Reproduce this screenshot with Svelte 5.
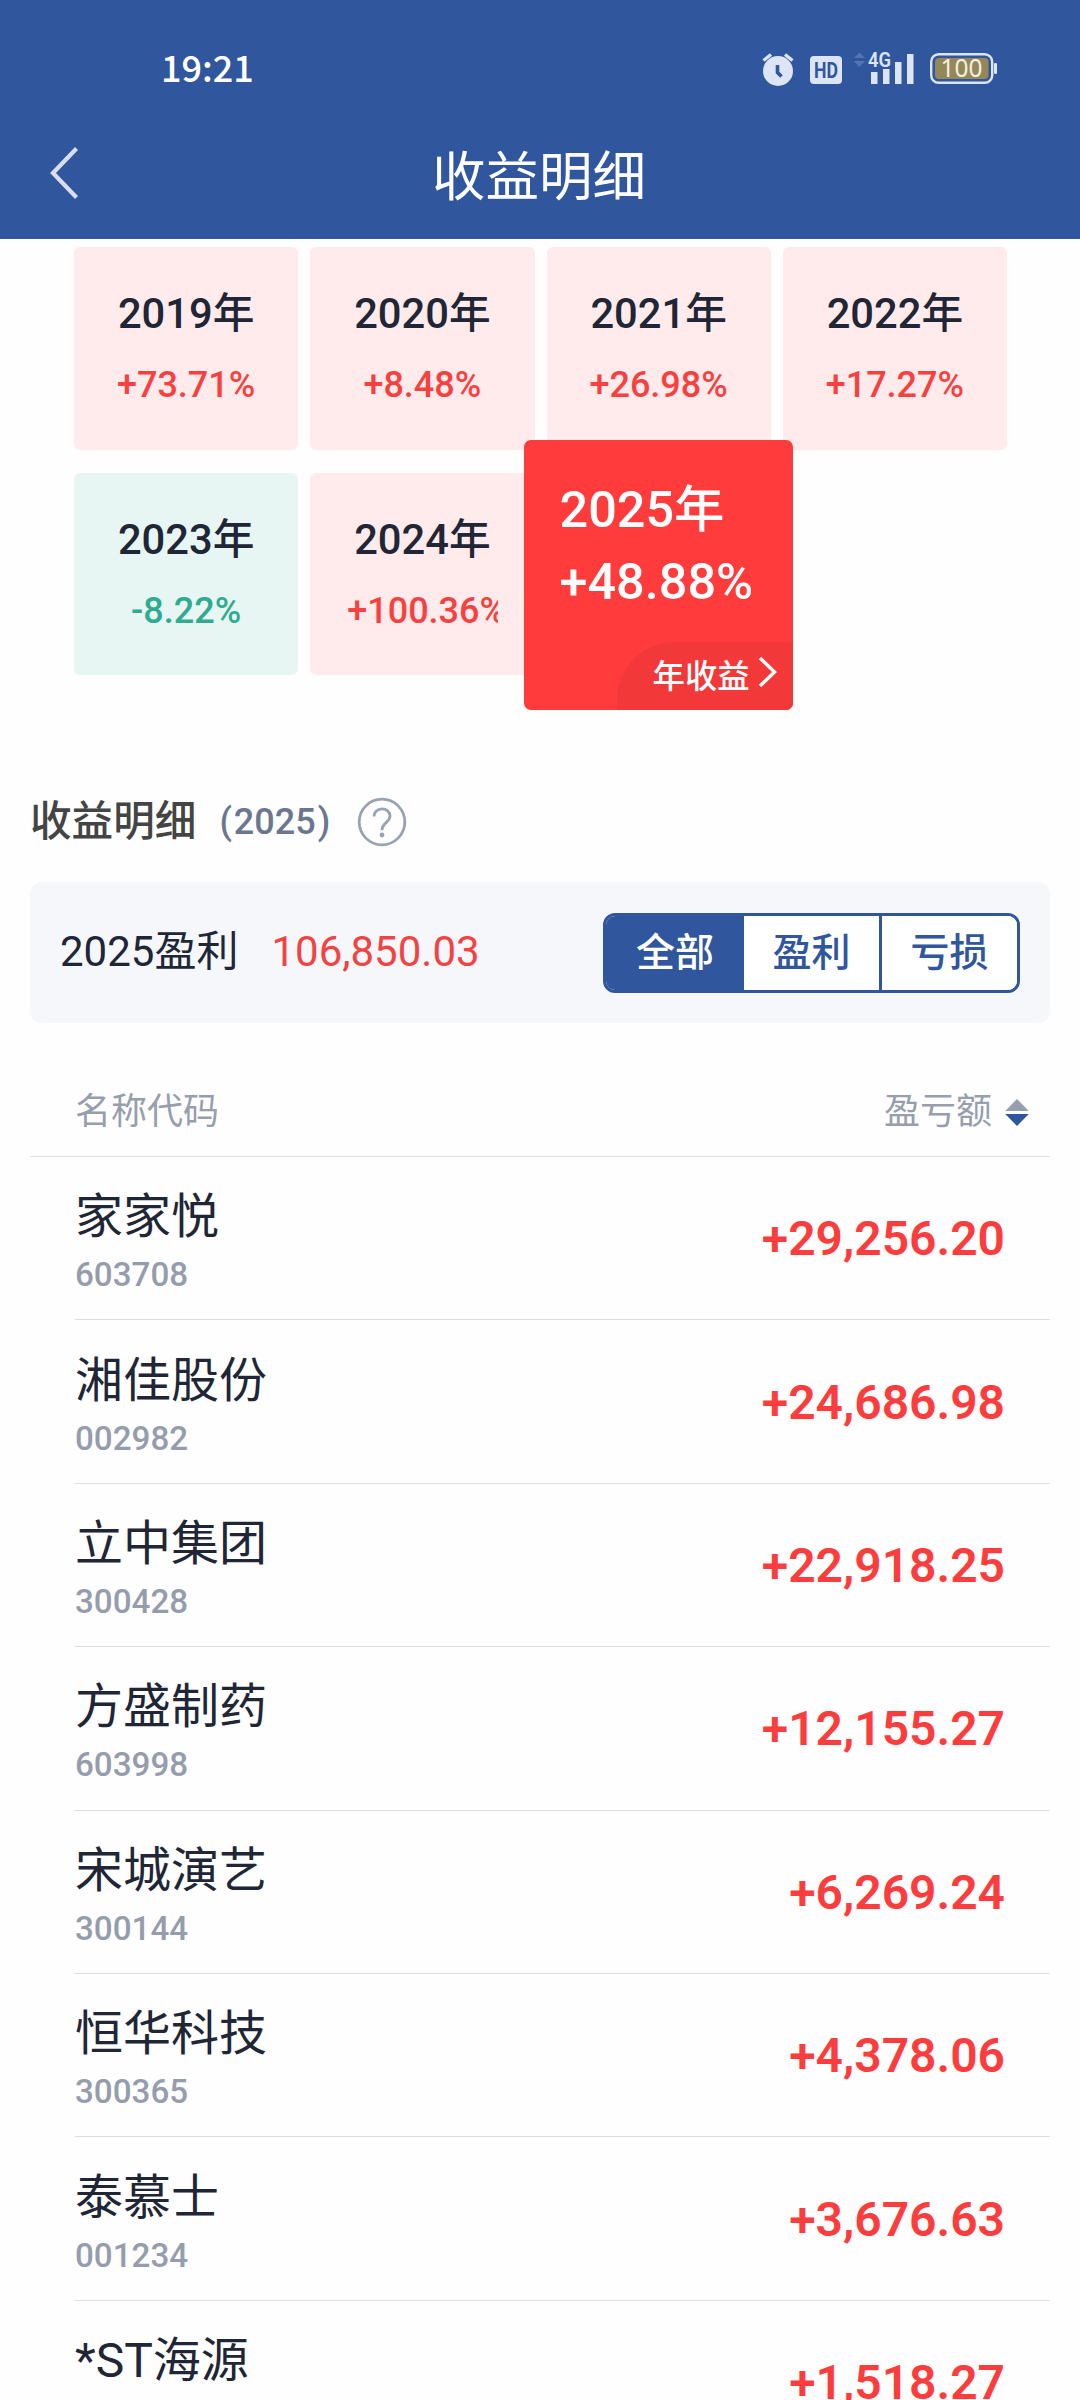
<script>
  let filter = 'all';

  const years = [
    { year: 2019, rate: 73.71 },
    { year: 2020, rate: 8.48 },
    { year: 2021, rate: 26.98 },
    { year: 2022, rate: 17.27 },
    { year: 2023, rate: -8.22 },
    { year: 2024, rate: 100.36 },
    { year: 2025, rate: 48.88 }
  ];
  const selected = 2025;

  const tabs = [
    { key: 'all', label: '全部' },
    { key: 'gain', label: '盈利' },
    { key: 'loss', label: '亏损' }
  ];

  const stocks = [
    { name: '家家悦', code: '603708', amount: 29256.2 },
    { name: '湘佳股份', code: '002982', amount: 24686.98 },
    { name: '立中集团', code: '300428', amount: 22918.25 },
    { name: '方盛制药', code: '603998', amount: 12155.27 },
    { name: '宋城演艺', code: '300144', amount: 6269.24 },
    { name: '恒华科技', code: '300365', amount: 4378.06 },
    { name: '泰慕士', code: '001234', amount: 3676.63 },
    { name: '*ST海源', code: '', amount: 1518.27 }
  ];

  $: rows = stocks.filter((s) => filter === 'all' || (filter === 'gain' ? s.amount > 0 : s.amount < 0));

  function formatRate(n) {
    return (n > 0 ? '+' : '') + n.toFixed(2) + '%';
  }

  function formatMoney(n) {
    return n.toFixed(2).replace(/\B(?=(\d{3})+\.)/g, ',');
  }
</script>

<div class="screen">
  <header>
    <div class="status">
      <span class="time">19:21</span>
      <svg class="status-icons" width="280" height="80" viewBox="0 0 280 80" fill="#dde5f4">
        <!-- alarm -->
        <circle cx="38" cy="41" r="15" />
        <path d="M23.500 30.500 31 24.500M52.500 30.500 45 24.500" stroke="#dde5f4" stroke-width="3.4" />
        <path d="M37.500 35v7.500l4 4" fill="none" stroke="#30569e" stroke-width="3.6" />
        <!-- HD -->
        <rect x="70" y="26" width="32" height="28" rx="4" />
        <text class="hd" x="74" y="48" textLength="24" lengthAdjust="spacingAndGlyphs">HD</text>
        <!-- signal -->
        <path d="M119.500 22.500 125 28h-11zM119.500 37 125 31h-11z" fill="#5575b2" />
        <text class="net" x="128" y="37" textLength="23" lengthAdjust="spacingAndGlyphs">4G</text>
        <path d="M131 42h6.500v12H131zM143 39h6.500v15H143zM155 32h6.500v22H155zM167 24h6.500v30H167z" />
        <!-- battery -->
        <rect x="191.200" y="24.200" width="61" height="28.600" rx="7.500" fill="none" stroke="#dde5f4" stroke-width="2.4" />
        <rect x="195" y="28" width="53.500" height="21" rx="4" fill="#958858" />
        <rect x="254" y="33" width="3" height="11" rx="1.200" />
        <text class="level" x="200.500" y="47" textLength="42" lengthAdjust="spacingAndGlyphs">100</text>
      </svg>
    </div>
    <div class="nav">
      <svg class="back" width="30" height="54" viewBox="0 0 30 54">
        <path d="M27.500 2.500 4 27 27.500 51.500" fill="none" stroke="#d9deee" stroke-width="4.2" />
      </svg>
      <h1>收益明细</h1>
    </div>
  </header>

  <section class="years">
    {#each years as y}
      <div class="cell">
        {#if y.year === selected}
          <div class="card-active">
            <div class="year">{y.year}年</div>
            <div class="rate">{formatRate(y.rate)}</div>
            <div class="more">
              年收益
              <svg width="20" height="32" viewBox="0 0 20 32">
                <path d="M2 2 16.500 16 2 30" fill="none" stroke="#fff" stroke-width="3.4" />
              </svg>
            </div>
          </div>
        {:else}
          <div class="card" class:down={y.rate < 0}>
            <div class="year">{y.year}年</div>
            <div class="rate">{formatRate(y.rate)}</div>
          </div>
        {/if}
      </div>
    {/each}
  </section>

  <section class="detail">
    <div class="heading">
      <h2>收益明细</h2>
      <span class="heading-year">(<b>{selected}</b>)</span>
      <svg width="50" height="50" viewBox="0 0 50 50" fill="none" stroke="#99a2b2" stroke-width="2.8">
        <circle cx="25" cy="25" r="22.800" />
        <path d="M17 19.500c0-4.600 3.500-7.700 8-7.700s8 3.100 8 7.300c0 6.400-8 6.400-8 14.200" />
        <circle cx="25" cy="38" r="2.400" fill="#99a2b2" stroke="none" />
      </svg>
    </div>

    <div class="summary">
      <span>{selected}盈利</span>
      <span class="total">{formatMoney(106850.03)}</span>
      <div class="tabs">
        {#each tabs as t}
          <button class:on={filter === t.key} on:click={() => (filter = t.key)}>{t.label}</button>
        {/each}
      </div>
    </div>

    <div class="thead">
      <span>名称代码</span>
      <span class="sort">
        盈亏额
        <svg width="24" height="28" viewBox="0 0 24 28">
          <path d="M12 0 23.800 12H.2z" fill="#979eae" />
          <path d="M12 27 23.800 15H.2z" fill="#30569e" />
        </svg>
      </span>
    </div>

    {#each rows as r}
      <div class="row">
        <div class="stock">
          <div class="name">{r.name}</div>
          <div class="code">{r.code}</div>
        </div>
        <div class="amount">+{formatMoney(r.amount)}</div>
      </div>
    {/each}
  </section>
</div>

<style>
  :global(body) {
    margin: 0;
    background: #fefefe;
  }

  .screen {
    width: 1080px;
    height: 2400px;
    overflow: hidden;
    background: #fefefe;
    color: #202635;
    font-family: Roboto, 'Noto Sans CJK SC', sans-serif;
  }

  header {
    height: 239px;
    background: #30569e;
    color: #fff;
  }

  .status {
    display: flex;
    justify-content: space-between;
    height: 110px;
    padding: 30px 60px 0 161px;
    box-sizing: border-box;
  }

  .time {
    font-family: 'Noto Sans CJK SC', sans-serif;
    font-size: 36px;
    font-weight: 500;
    line-height: 73px;
  }

  .hd {
    font-size: 22px;
    font-weight: 700;
    fill: #30569e;
  }

  .net {
    font-size: 21px;
    font-weight: 600;
  }

  .level {
    font-family: 'Noto Sans', sans-serif;
    font-size: 25px;
    fill: #f3efe0;
  }

  .nav {
    display: grid;
    grid-template-columns: 130px 1fr 132px;
    align-items: center;
    height: 126px;
  }

  .back {
    margin-left: 49px;
  }

  h1 {
    margin: 0;
    padding-top: 9px;
    font-size: 53.5px;
    font-weight: 400;
    line-height: 70px;
    text-align: center;
  }

  .years {
    display: grid;
    grid-template-columns: repeat(4, minmax(0, 1fr));
    grid-auto-rows: 202.5px;
    gap: 23px 12px;
    padding: 8px 73px 0 74px;
  }

  .cell {
    position: relative;
  }

  .card {
    height: 100%;
    padding: 39px 37px 0;
    box-sizing: border-box;
    border-radius: 6px;
    background: #ffebeb;
    text-align: center;
  }

  .card.down {
    background: #e7f6f3;
  }

  .year {
    font-size: 41.7px;
    font-weight: 500;
    line-height: 56px;
    white-space: nowrap;
  }

  .rate {
    margin-top: 20px;
    overflow: hidden;
    color: #f74040;
    font-size: 36px;
    font-weight: 500;
    line-height: 46px;
  }

  .down .rate {
    color: #30ab91;
  }

  /* the picked year grows over its neighbours */
  .card-active {
    position: absolute;
    top: -33px;
    left: -23px;
    z-index: 1;
    width: 269px;
    height: 270px;
    padding: 34px 0 0 36px;
    box-sizing: border-box;
    overflow: hidden;
    border-radius: 7px;
    background: #ff3b3b;
    color: #fff;
  }

  .card-active .year {
    font-size: 50.4px;
    line-height: 71px;
  }

  .card-active .rate {
    margin: 1px 0 0;
    color: #fff;
    font-size: 50.4px;
    line-height: 71px;
  }

  .more {
    position: absolute;
    right: 0;
    bottom: 0;
    display: flex;
    align-items: center;
    gap: 8px;
    width: 176px;
    height: 68px;
    padding: 0 0 5px 36px;
    box-sizing: border-box;
    border-radius: 58px 0 0 0;
    background: #f23838;
    font-size: 32.4px;
    font-weight: 500;
    white-space: nowrap;
  }

  .more svg {
    margin-top: -3px;
  }

  .detail {
    padding: 119px 30px 0;
  }

  .heading {
    display: flex;
    align-items: center;
    height: 56px;
  }

  h2 {
    margin: 0;
    color: #444;
    font-size: 41.6px;
    font-weight: 500;
    line-height: 56px;
  }

  .heading-year {
    margin: 0 27px 0 23px;
    color: #6b7790;
    font-size: 36px;
    font-weight: 500;
    line-height: 56px;
  }

  .heading-year b {
    margin: 0 2px;
    font-weight: 500;
  }

  .summary {
    display: flex;
    align-items: center;
    height: 141px;
    margin-top: 32px;
    padding: 0 30px;
    border-radius: 12px;
    background: #f5f7fb;
    font-size: 42px;
    line-height: 56px;
  }

  .summary span {
    margin-top: -2px;
  }

  .summary .total {
    margin-left: 33px;
    color: #f24343;
  }

  .tabs {
    display: flex;
    margin-left: auto;
    border: 3px solid #30569e;
    border-radius: 12px;
    overflow: hidden;
    background: #fff;
  }

  button {
    width: 138px;
    height: 74px;
    padding: 0;
    border: 0;
    border-left: 3px solid #30569e;
    background: #fff;
    color: #30569e;
    font: 500 39px/70px Roboto, 'Noto Sans CJK SC', sans-serif;
  }

  button:first-child {
    width: 135px;
    padding-left: 3px;
    border-left: 0;
  }

  button.on {
    background: #30569e;
    color: #fff;
  }

  .thead {
    display: flex;
    justify-content: space-between;
    align-items: center;
    height: 134px;
    padding: 45px 21px 0 45px;
    box-sizing: border-box;
    border-bottom: 1px solid #dcdee5;
    color: #979eae;
    font-size: 36px;
    line-height: 50px;
  }

  .sort {
    display: flex;
    align-items: center;
    gap: 13px;
  }

  .sort svg {
    margin-top: 2px;
  }

  .row {
    display: flex;
    justify-content: space-between;
    align-items: center;
    height: 163.4px;
    margin-left: 45px;
    padding-right: 45px;
    box-sizing: border-box;
    border-bottom: 1px solid #dcdee5;
  }

  .stock {
    padding-top: 8px;
  }

  .name {
    font-size: 48px;
    line-height: 56px;
  }

  .code {
    height: 40px;
    margin-top: 10px;
    color: #959dad;
    font-size: 33.2px;
    font-weight: 500;
    line-height: 40px;
  }

  .amount {
    margin-top: 2px;
    color: #fc3d3d;
    font-size: 48px;
    font-weight: 600;
    line-height: 56px;
  }
</style>
